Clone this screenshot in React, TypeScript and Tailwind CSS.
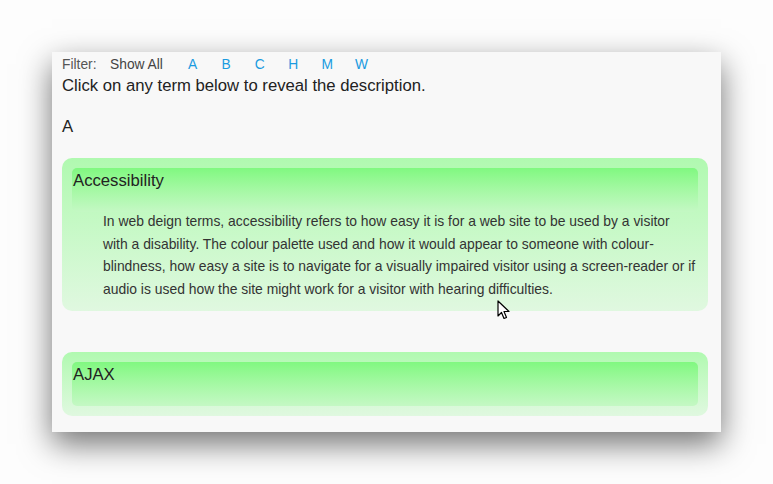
import React from 'react'

const letters = ['A', 'B', 'C', 'H', 'M', 'W']

export default function App() {
  return (
    <div className="w-[773px] h-[484px] bg-[#fdfdfd] pt-[52px] pl-[52px] font-['Liberation_Sans',Arial,sans-serif]">
      <div className="relative w-[669px] h-[380px] bg-[#f8f8f8] shadow-[0_12px_30px_rgba(0,0,0,0.55)] pl-[10px] pr-[13px] pt-[3px]">
        {/* Filter bar */}
        <div className="flex items-center text-[13.8px] h-[20px] leading-[20px]">
          <span className="text-[#555] w-[48px]">Filter:</span>
          <span className="text-[#444] w-[78px]">Show All</span>
          {letters.map((l) => (
            <span key={l} className="text-[#1a9be0] w-[33.4px]">
              {l}
            </span>
          ))}
        </div>
        <p className="text-[16.7px] leading-[22px] text-[#222]">
          Click on any term below to reveal the description.
        </p>
        <h2 className="text-[16.7px] leading-[22px] text-[#222] mt-[19px]">A</h2>

        <Term title="Accessibility" className="mt-[20px]">
          In web deign terms, accessibility refers to how easy it is for a web site to be used by a visitor with a
          disability. The colour palette used and how it would appear to someone with colour-blindness, how easy a
          site is to navigate for a visually impaired visitor using a screen-reader or if audio is used how the site
          might work for a visitor with hearing difficulties.
        </Term>

        <Term title="AJAX" className="mt-[41px]" />

        {/* mouse cursor */}
        <svg
          className="absolute left-[445px] top-[248px]"
          width="14"
          height="21"
          viewBox="0 0 14 21"
        >
          <path
            d="M1 1 L1 16 L4.5 12.5 L7 18.5 L9.5 17.5 L7 11.5 L12 11.5 Z"
            fill="#fff"
            stroke="#000"
            strokeWidth="1.2"
            strokeLinejoin="round"
          />
        </svg>
      </div>
    </div>
  )
}

function Term({
  title,
  className,
  children,
}: {
  title: string
  className?: string
  children?: React.ReactNode
}) {
  return (
    <div
      className={`rounded-[10px] bg-gradient-to-b from-[#b0f9b0] to-[#e0f8e0] p-[10px] ${className ?? ''}`}
    >
      <div className="h-[44px] rounded-[5px] bg-gradient-to-b from-[#80f880] to-[#c4f8c4] pl-[1px] pt-[2px] text-[16.7px] leading-[22px] text-[#222]">
        {title}
      </div>
      {children && (
        <p className="pl-[31px] pr-[0px] text-[13.9px] leading-[22.7px] text-[#333] -mt-[2px]">
          {children}
        </p>
      )}
    </div>
  )
}
